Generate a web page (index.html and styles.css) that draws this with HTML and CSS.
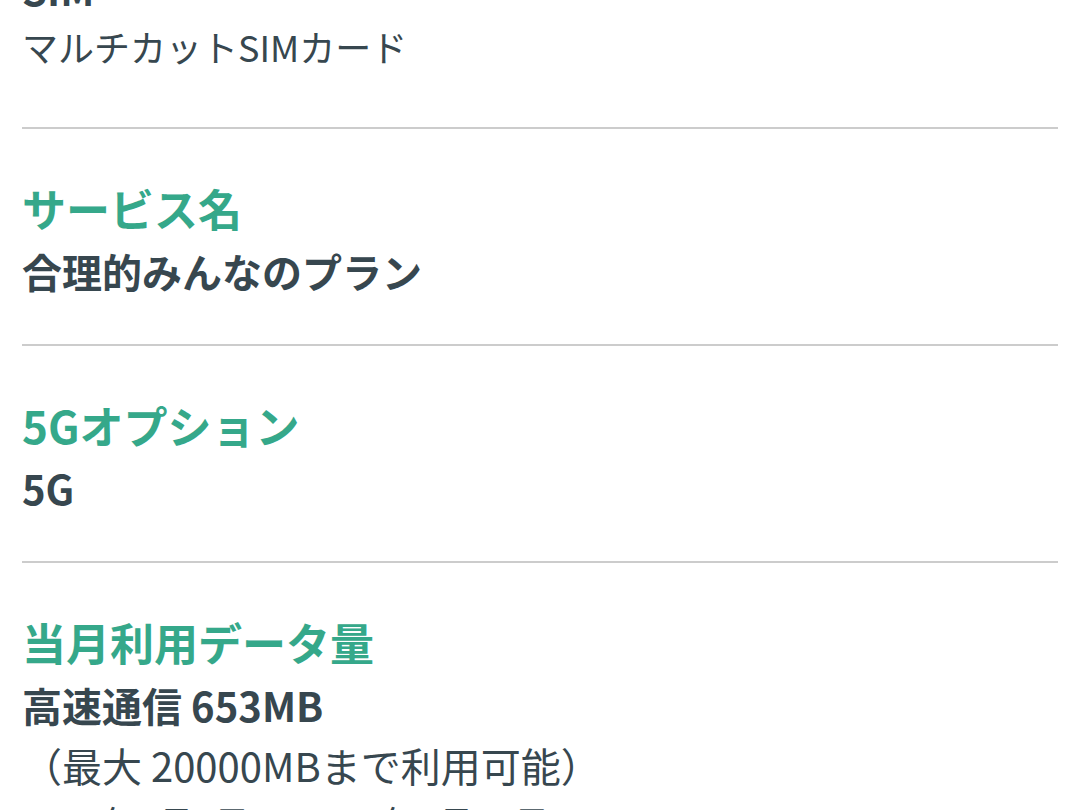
FILE: index.html
```html
<!DOCTYPE html>
<html lang="ja">
<head>
    <meta charset="UTF-8">
    <meta name="viewport" content="width=device-width, initial-scale=1.0">
    <title>ご契約内容</title>
    <link rel="stylesheet" href="styles.css">
</head>
<body>
    <dl class="info-list">
        <div class="info-item">
            <dt class="info-label">SIMタイプ</dt>
            <dd class="info-value">SIM</dd>
            <dd class="info-sub info-sub-spaced">マルチカットSIMカード</dd>
        </div>
        <div class="info-item">
            <dt class="info-label">サービス名</dt>
            <dd class="info-value">合理的みんなのプラン</dd>
        </div>
        <div class="info-item">
            <dt class="info-label">5Gオプション</dt>
            <dd class="info-value">5G</dd>
        </div>
        <div class="info-item">
            <dt class="info-label">当月利用データ量</dt>
            <dd class="info-value">高速通信 653MB</dd>
            <dd class="info-note">（最大 20000MBまで利用可能）</dd>
            <dd class="info-sub">2024年1月1日 〜 2024年1月31日</dd>
        </div>
    </dl>
</body>
</html>
```

FILE: styles.css
```css
body {
    font-family: "Noto Sans CJK JP", "Noto Sans", sans-serif;
    margin: 0;
    padding: 0 22px;
    background-color: #fff;
    color: #37474f;
    overflow: hidden;
}
.info-list {
    margin: -153px 0 0;
    padding: 0;
}
.info-item {
    padding: 46px 0 43px;
    border-bottom: 2px solid #cccccc;
}
.info-label {
    font-size: 44px;
    font-weight: bold;
    line-height: 66px;
    color: #35a88a;
}
.info-value {
    margin: 0;
    font-size: 40px;
    font-weight: bold;
    line-height: 60px;
}
.info-note {
    margin: 0;
    font-size: 40px;
    line-height: 60px;
}
.info-sub {
    margin: 0;
    font-size: 36px;
    line-height: 54px;
}
.info-sub-spaced {
    margin-bottom: 11px;
}
```
